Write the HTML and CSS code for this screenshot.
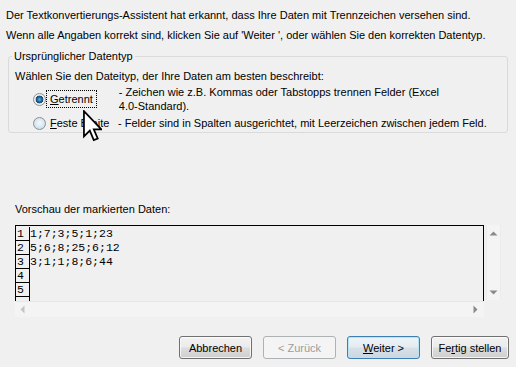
FILE: index.html
```html
<!DOCTYPE html>
<html lang="de">
<head>
<meta charset="utf-8">
<title>Textkonvertierungs-Assistent</title>
<link rel="stylesheet" href="styles.css">
</head>
<body>
<div class="dialog">
  <p class="intro first">Der Textkonvertierungs-Assistent hat erkannt, dass Ihre Daten mit Trennzeichen versehen sind.</p>
  <p class="intro second">Wenn alle Angaben korrekt sind, klicken Sie auf 'Weiter ', oder wählen Sie den korrekten Datentyp.</p>

  <fieldset class="group">
    <legend class="group-title">Ursprünglicher Datentyp</legend>
    <div class="prompt">Wählen Sie den Dateityp, der Ihre Daten am besten beschreibt:</div>
    <div class="option option-first">
      <span class="radio checked"></span>
      <span class="option-label focused"><u>G</u>etrennt</span>
      <span class="option-desc">- Zeichen wie z.B. Kommas oder Tabstopps trennen Felder (Excel<br>4.0-Standard).</span>
    </div>
    <div class="option option-second">
      <span class="radio"></span>
      <span class="option-label"><u>F</u>este Breite</span>
      <span class="option-desc">- Felder sind in Spalten ausgerichtet, mit Leerzeichen zwischen jedem Feld.</span>
    </div>
  </fieldset>

  <div class="preview-label">Vorschau der markierten Daten:</div>
  <div class="preview">
    <div class="preview-top">
      <div class="grid">
        <div class="row"><span class="num">1</span><span class="data">1;7;3;5;1;23</span></div>
        <div class="row"><span class="num">2</span><span class="data">5;6;8;25;6;12</span></div>
        <div class="row"><span class="num">3</span><span class="data">3;1;1;8;6;44</span></div>
        <div class="row"><span class="num">4</span><span class="data"></span></div>
        <div class="row"><span class="num">5</span><span class="data"></span></div>
        <div class="row"><span class="num"></span><span class="data"></span></div>
      </div>
      <div class="vscroll">
        <svg class="arrow" width="9" height="5" viewBox="0 0 9 5"><path d="M0.5 4.5 L4.5 0.5 L8.5 4.5 Z" fill="#8a8a8a"/></svg>
        <svg class="arrow" width="9" height="5" viewBox="0 0 9 5"><path d="M0.5 0.5 L4.5 4.5 L8.5 0.5 Z" fill="#8a8a8a"/></svg>
      </div>
    </div>
    <div class="hscroll">
      <svg class="arrow" width="5" height="9" viewBox="0 0 5 9"><path d="M4.5 0.5 L0.5 4.5 L4.5 8.5 Z" fill="#c4c4c4"/></svg>
      <svg class="arrow" width="5" height="9" viewBox="0 0 5 9"><path d="M0.5 0.5 L4.5 4.5 L0.5 8.5 Z" fill="#8a8a8a"/></svg>
    </div>
  </div>

  <div class="buttons">
    <button class="btn">Abbrechen</button>
    <button class="btn disabled">&lt; Zurück</button>
    <button class="btn default"><u>W</u>eiter &gt;</button>
    <button class="btn wide">Fe<u>r</u>tig stellen</button>
  </div>

  <svg class="cursor" width="19" height="32" viewBox="0 0 12 20">
    <path d="M0.6 0.6 L0.6 16.6 L4.3 12.9 L6.8 18.9 L9.3 17.9 L6.8 12.1 L11.6 12.1 Z" fill="#fff" stroke="#000" stroke-width="1.1" stroke-linejoin="miter"/>
  </svg>
</div>
</body>
</html>
```

FILE: styles.css
```css
* { box-sizing: border-box; }

html, body {
  margin: 0;
  padding: 0;
  background: #f0f0f0;
}

.dialog {
  position: relative;
  width: 516px;
  height: 367px;
  overflow: hidden;
  background: #f0f0f0;
  color: #000;
  font-family: "Liberation Sans", Arial, sans-serif;
  font-size: 11px;
  line-height: 14px;
  display: flex;
  flex-direction: column;
}

.intro {
  margin: 0;
  padding-left: 6px;
  white-space: nowrap;
}
.intro.first { margin-top: 8px; }
.intro.second { margin-top: 6px; }

.group {
  margin: 7px 0 0 8px;
  width: 500px;
  padding: 0 0 2px 6px;
  border: 1px solid #dadada;
  border-radius: 3px;
  min-width: 0;
}

.group-title {
  padding: 0 2px;
  margin-left: -3px;
  line-height: 14px;
}

.prompt {
  margin-top: 6px;
  white-space: nowrap;
}

.option {
  display: flex;
  align-items: center;
  padding-left: 18px;
}
.option-first { margin-top: 2px; }
.option-second { margin-top: 3px; }

.radio {
  flex: none;
  width: 13px;
  height: 13px;
  border-radius: 50%;
  border: 1px solid #8e8f8f;
  background: radial-gradient(circle at 50% 45%, #f4f9fc 0%, #d6e7f2 55%, #b9d3e6 100%);
}
.radio.checked {
  background: radial-gradient(circle at 50% 50%, #5fb4e3 0px, #1f5f93 2.5px, #174e7a 3.6px, #e9eef2 4.2px, #f4f4f4 100%);
}

.option-label {
  width: 70px;
  margin-left: 2px;
  padding: 0 2px;
  white-space: nowrap;
}
.option-label.focused {
  width: auto;
  margin-right: 24px;
  outline: 1px dotted #000;
  outline-offset: 1px;
}

.option-desc {
  white-space: nowrap;
}

.preview-label {
  margin-top: 69px;
  padding-left: 15px;
}

.preview {
  margin: 9px 0 0 15px;
  width: 486px;
}

.preview-top {
  display: flex;
  height: 76px;
}

.grid {
  width: 469px;
  height: 76px;
  border: 1px solid #000;
  border-bottom: none;
  padding-top: 1px;
  overflow: hidden;
  font-family: "Liberation Mono", "Courier New", monospace;
  font-size: 11.5px;
  line-height: 13px;
}

.row {
  display: flex;
  height: 14px;
}

.num {
  width: 14px;
  flex: none;
  border-right: 1px solid #000;
  border-bottom: 1px solid #000;
  padding-left: 1px;
}

.data {
  white-space: pre;
}

.vscroll {
  margin-left: 2px;
  width: 15px;
  height: 75px;
  background: #f4f4f4;
  border-left: 1px solid #ececec;
  border-right: 1px solid #ececec;
  display: flex;
  flex-direction: column;
  justify-content: space-between;
  align-items: center;
  padding: 6px 0 5px;
}

.hscroll {
  width: 469px;
  height: 16px;
  background: #f4f4f4;
  border-top: 1px solid #e8e8e8;
  display: flex;
  justify-content: space-between;
  align-items: center;
  padding: 0 6px 0 5px;
}

.arrow { display: block; }

.buttons {
  margin-top: 19px;
  display: flex;
  justify-content: flex-end;
  gap: 11px;
  padding-right: 7px;
}

.btn {
  width: 73px;
  height: 23px;
  padding: 0;
  font-family: "Liberation Sans", Arial, sans-serif;
  font-size: 11px;
  color: #000;
  border: 1px solid #707070;
  border-radius: 3px;
  background: linear-gradient(#f2f2f2 0%, #ebebeb 48%, #dddddd 52%, #cfcfcf 100%);
  box-shadow: inset 0 0 0 1px rgba(255,255,255,0.75);
}
.btn.wide { width: 78px; }
.btn.disabled {
  color: #9c9c9c;
  border-color: #adb2b5;
  background: #f4f4f4;
  box-shadow: none;
}
.btn.default {
  border-color: #3c7fb1;
  background: linear-gradient(#eef4f8 0%, #e4ecf2 48%, #d7e1e9 52%, #cbd6df 100%);
  box-shadow: inset 0 0 0 1px #b8e2f6;
}

.cursor {
  position: absolute;
  left: 83px;
  top: 110px;
}
```
